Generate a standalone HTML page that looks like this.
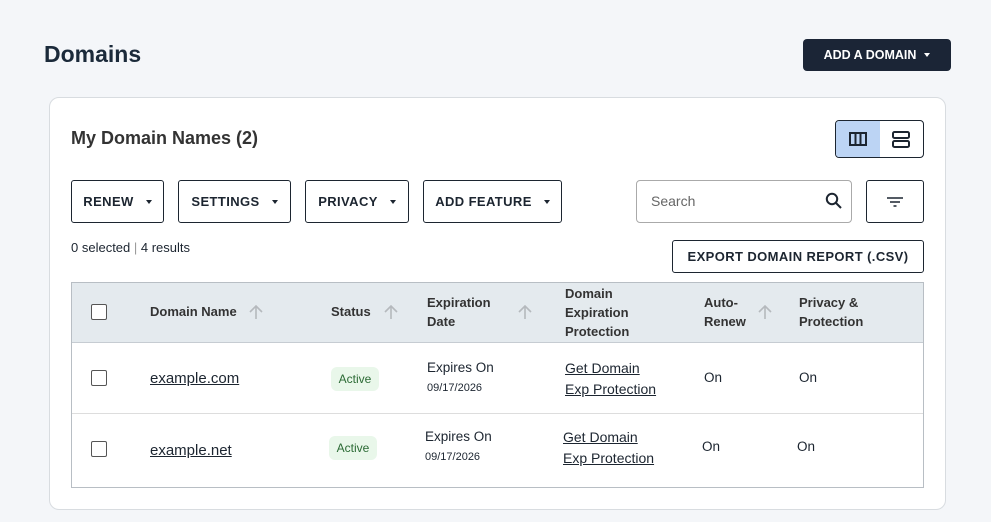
<!DOCTYPE html><html><head><style>
*{box-sizing:border-box;margin:0;padding:0}
body{width:991px;height:522px;background:#f4f6f9;font-family:"Liberation Sans",sans-serif;color:#1c2530;position:relative;overflow:hidden}
.a{position:absolute}
h1{position:absolute;left:44px;top:41px;font-size:23px;font-weight:bold;color:#1b2a3a}
.btnd{left:803px;top:39px;width:148px;height:32px;background:#1b2536;color:#fff;border-radius:4px;font-size:12.5px;font-weight:bold;display:flex;align-items:center;justify-content:center;gap:6px}
.card{left:49px;top:97px;width:897px;height:413px;background:#fff;border:1px solid #d8dce0;border-radius:10px}
.ob{position:absolute;border:1px solid #1c2530;border-radius:3px;background:#fff;font-size:13px;font-weight:bold;display:flex;align-items:center;justify-content:center;letter-spacing:.4px}
.car{display:inline-block;border-left:3.5px solid transparent;border-right:3.5px solid transparent;border-top:4px solid #1c2530;margin-left:12px}
.tbl{left:71px;top:282px;width:853px;height:206px;border:1px solid #b8bec4}
.hd{left:0;top:0;width:851px;height:60px;background:#e4eaee;border-bottom:1px solid #c6ccd2}
.th{position:absolute;font-size:13px;font-weight:bold;line-height:19px;color:#333}
.cb{position:absolute;width:16px;height:16px;border:1px solid #555;border-radius:2px;background:#fff}
.lnk{position:absolute;font-size:15px;text-decoration:underline;color:#1c2530;line-height:21px}
.badge{position:absolute;background:#e9f7ea;color:#2b6a34;font-size:12px;border-radius:6px;width:48px;height:24px;display:flex;align-items:center;justify-content:center}
.t{position:absolute;font-size:13.5px}
.s{position:absolute;font-size:11px}
.arr{position:absolute}
</style></head><body>
<h1>Domains</h1>
<div class="a btnd">ADD A DOMAIN <span class="car" style="border-top-color:#fff;margin-left:2px"></span></div>
<div class="a card"></div>
<div class="a" style="left:71px;top:128px;font-size:18px;font-weight:bold;color:#333">My Domain Names (2)</div>
<div class="a" style="left:835px;top:120px;width:89px;height:38px;border:1px solid #1c2530;border-radius:4px;overflow:hidden;background:#fff">
<div style="width:44px;height:36px;background:#bcd4f4;display:flex;align-items:center;justify-content:center"><svg width="18" height="14"><rect x="1" y="1" width="16" height="12" fill="none" stroke="#1c2530" stroke-width="2"/><path d="M6.5 1v12M11.5 1v12" stroke="#1c2530" stroke-width="2"/></svg></div>
<svg class="a" style="left:56px;top:10px" width="18" height="18"><rect x="1" y="1" width="16" height="6" rx="1.5" fill="none" stroke="#1c2530" stroke-width="2"/><rect x="1" y="10" width="16" height="6" rx="1.5" fill="none" stroke="#1c2530" stroke-width="2"/></svg></div>
<div class="ob" style="left:71px;top:180px;width:93px;height:43px">RENEW<span class="car"></span></div>
<div class="ob" style="left:178px;top:180px;width:113px;height:43px">SETTINGS<span class="car"></span></div>
<div class="ob" style="left:305px;top:180px;width:104px;height:43px">PRIVACY<span class="car"></span></div>
<div class="ob" style="left:423px;top:180px;width:139px;height:43px">ADD FEATURE<span class="car"></span></div>
<div class="a" style="left:636px;top:180px;width:216px;height:43px;border:1px solid #aaa;border-radius:4px;background:#fff"><span class="a" style="left:14px;top:12px;font-size:14px;color:#666">Search</span>
<svg class="a" style="left:188px;top:11px" width="18" height="18"><circle cx="7" cy="7" r="5.2" fill="none" stroke="#1c2530" stroke-width="2"/><path d="M11 11l5 5" stroke="#1c2530" stroke-width="2"/></svg></div>
<div class="ob" style="left:866px;top:180px;width:58px;height:43px"><svg width="18" height="12"><path d="M1 2h16M4 6h10M7.5 10h3" stroke="#1c2530" stroke-width="1.6"/></svg></div>
<div class="a" style="left:71px;top:240px;font-size:13px">0 selected <span style="color:#999">|</span> 4 results</div>
<div class="ob" style="left:672px;top:240px;width:252px;height:33px">EXPORT DOMAIN REPORT (.CSV)</div>
<div class="a tbl">
<div class="a hd"></div>
<div class="cb" style="left:19px;top:21px"></div>
<div class="th" style="left:78px;top:19px">Domain Name</div>
<svg class="arr" style="left:176px;top:21px" width="16" height="16"><path d="M8 15V2M2 8l6-6 6 6" fill="none" stroke="#b5b9bd" stroke-width="1.6"/></svg>
<div class="th" style="left:259px;top:19px">Status</div>
<svg class="arr" style="left:311px;top:21px" width="16" height="16"><path d="M8 15V2M2 8l6-6 6 6" fill="none" stroke="#b5b9bd" stroke-width="1.6"/></svg>
<div class="th" style="left:355px;top:10px">Expiration<br>Date</div>
<svg class="arr" style="left:445px;top:21px" width="16" height="16"><path d="M8 15V2M2 8l6-6 6 6" fill="none" stroke="#b5b9bd" stroke-width="1.6"/></svg>
<div class="th" style="left:493px;top:1px">Domain<br>Expiration<br>Protection</div>
<div class="th" style="left:632px;top:10px">Auto-<br>Renew</div>
<svg class="arr" style="left:685px;top:21px" width="16" height="16"><path d="M8 15V2M2 8l6-6 6 6" fill="none" stroke="#b5b9bd" stroke-width="1.6"/></svg>
<div class="th" style="left:727px;top:10px">Privacy &amp;<br>Protection</div>
<div class="a" style="left:0;top:130px;width:851px;height:1px;background:#ddd"></div>
<div class="cb" style="left:19px;top:87px"></div>
<div class="lnk" style="left:78px;top:85px">example.com</div>
<div class="badge" style="left:259px;top:84px">Active</div>
<div class="t" style="left:355px;top:77px">Expires On</div><div class="s" style="left:355px;top:99px">09/17/2026</div>
<div class="lnk" style="left:493px;top:75px;font-size:14px">Get Domain<br>Exp Protection</div>
<div class="t" style="left:632px;top:87px">On</div><div class="t" style="left:727px;top:87px">On</div>
<div class="cb" style="left:19px;top:158px"></div>
<div class="lnk" style="left:78px;top:157px">example.net</div>
<div class="badge" style="left:257px;top:153px">Active</div>
<div class="t" style="left:353px;top:146px">Expires On</div><div class="s" style="left:353px;top:168px">09/17/2026</div>
<div class="lnk" style="left:491px;top:144px;font-size:14px">Get Domain<br>Exp Protection</div>
<div class="t" style="left:630px;top:156px">On</div><div class="t" style="left:725px;top:156px">On</div>
</div>
</body></html>
